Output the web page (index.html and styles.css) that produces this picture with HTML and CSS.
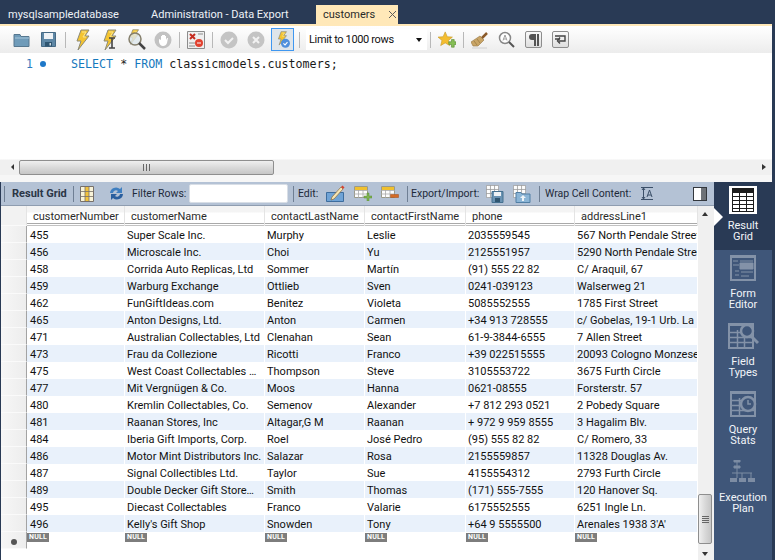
FILE: index.html
```html
<!DOCTYPE html>
<html lang="en">
<head>
<meta charset="utf-8">
<title>customers</title>
<link rel="stylesheet" href="styles.css">
</head>
<body>
<svg class="defs" width="0" height="0" aria-hidden="true">
  <defs>
    <symbol id="bolt" viewBox="0 0 20 22"><path d="M9 1h8l-4 6h4L6 21l3-9H5z" fill="#f4c430" stroke="#8c8a78" stroke-width="1"/><path d="M10 3h4l-3 5h3" fill="none" stroke="#fbe58d"/></symbol>
    <symbol id="tablemini" viewBox="0 0 16 16"><path d="M.5.5h15v15H.5z" fill="#fdfdfd" stroke="#9c9c9c"/><path d="M0 5.500h16M0 10.500h16M5.500 0v16M10.500 0v16" stroke="#9c9c9c"/></symbol>
  </defs>
</svg>
<div class="app">
  <nav class="tabs">
    <span class="tab tab-a">mysqlsampledatabase</span>
    <span class="tab tab-b">Administration - Data Export</span>
    <span class="tab tab-on">customers<svg class="close" width="9" height="9" viewBox="0 0 9 9"><path d="M1 1l7 7M8 1L1 8" stroke="#5c5c5c" stroke-width="1"/></svg></span>
  </nav>
  <div class="work">
    <div class="toolbar">
      <span class="btn"><svg width="17" height="15" viewBox="0 0 17 15"><path d="M1 2.500h6l1 2h8v10H1z" fill="#6f9bb9" stroke="#56778f"/><path d="M2 6h14" stroke="#a7c6da"/></svg></span>
      <span class="btn"><svg width="15" height="15" viewBox="0 0 15 15"><path d="M.5.500h14v14H.5z" fill="#5e87a5" stroke="#466a85"/><path d="M3 1h9v6H3z" fill="#eef2f5"/><path d="M4 10h7v4.500H4z" fill="#2f5570"/><path d="M8.500 11h1.500v2.500H8.500z" fill="#cfdbe3"/></svg></span>
      <i class="sep"></i>
      <span class="btn"><svg width="20" height="22"><use href="#bolt"/></svg></span>
      <span class="btn"><svg width="20" height="22" viewBox="0 0 20 22"><use href="#bolt" width="20" height="22"/><path d="M10 9h6M13 9v10M10 19h6" stroke="#444" stroke-width="1.600" fill="none"/></svg></span>
      <span class="btn"><svg width="20" height="22" viewBox="0 0 20 22"><use href="#bolt" width="15" height="16"/><circle cx="9" cy="10" r="6" fill="#dde7ec" fill-opacity=".8" stroke="#857f6c" stroke-width="1.500"/><path d="M13 14l6 6" stroke="#444" stroke-width="2.500"/></svg></span>
      <span class="btn"><svg width="18" height="18" viewBox="0 0 18 18"><circle cx="9" cy="9" r="8.500" fill="#c2c2c2"/><path d="M5 8v3q1 4 4 4t4-3l1-5h-1l-1 2V5h-1v3V4H9v4V4H8v4V5H7v4z" fill="#fff"/></svg></span>
      <i class="sep"></i>
      <span class="btn"><svg width="18" height="18" viewBox="0 0 18 18"><path d="M.5.500h17v17H.5z" fill="#efefef" stroke="#8c8c8c"/><path d="M3 3l5 5M8 3L3 8" stroke="#c52a1e" stroke-width="2"/><path d="M2 12h6M2 15h6M11 3h5" stroke="#8c8c8c"/><circle cx="12" cy="12" r="4" fill="#e2412f"/><path d="M10 12h4" stroke="#fff"/></svg></span>
      <i class="sep"></i>
      <span class="btn"><svg width="18" height="18" viewBox="0 0 18 18"><circle cx="9" cy="9" r="8.500" fill="#c4c4c4"/><path d="M5 9l3 3 5-5" fill="none" stroke="#f2f2f2" stroke-width="2"/></svg></span>
      <span class="btn"><svg width="18" height="18" viewBox="0 0 18 18"><circle cx="9" cy="9" r="8.500" fill="#c4c4c4"/><path d="M6 6l6 6M12 6l-6 6" stroke="#f2f2f2" stroke-width="2"/></svg></span>
      <span class="btn"><span class="toggled"><svg width="18" height="18" viewBox="0 0 20 22"><use href="#bolt" width="17" height="18"/><circle cx="13" cy="15" r="5.500" fill="#4f8fdc"/><path d="M10.500 15l2 2 3-3.500" fill="none" stroke="#fff" stroke-width="1.300"/></svg></span></span>
      <i class="sep"></i>
      <span class="limit"><span class="limit-text">Limit to 1000 rows</span><i class="caret"></i></span>
      <i class="sep"></i>
      <span class="btn"><svg width="18" height="18" viewBox="0 0 20 20"><path d="M8 1l2.300 5.400 5.700.4-4.400 3.700 1.400 5.700-5-3-5 3 1.400-5.700L0 6.800l5.700-.4z" fill="#f4bd2f" stroke="#c79a2a" stroke-width=".7"/><path d="M12 12h3V9.500h3V12h2v3h-2v3h-3v-3h-3z" fill="#86bf55" stroke="#5b8c35" stroke-width=".7"/></svg></span>
      <i class="sep"></i>
      <span class="btn"><svg width="18" height="18" viewBox="0 0 18 18"><path d="M0 11l9-6 4 4-6 6H2z" fill="#c9a566" stroke="#94743f" stroke-width=".6"/><path d="M11 7l5-5" stroke="#8a5a2a" stroke-width="2.500"/><path d="M3 10l3 4M6 8l3 4" stroke="#94743f" stroke-width=".7"/><path d="M1 17h15" stroke="#d0d0d0"/></svg></span>
      <span class="btn"><svg width="17" height="17" viewBox="0 0 17 17"><circle cx="7" cy="7" r="5.500" fill="#fff" stroke="#888" stroke-width="1.500"/><path d="M11 11l5 5" stroke="#555" stroke-width="2"/><path d="M5 9.500L7 4l2 5.500M5.700 8h2.600" fill="none" stroke="#888" stroke-width=".8"/></svg></span>
      <span class="btn"><span class="keybox"><svg width="10" height="12" viewBox="0 0 10 12"><path d="M5 0H3a3 3 0 0 0 0 6h2zM5 0h2v12H5zM8 0h2v12H8z" fill="#555"/></svg></span></span>
      <span class="btn"><span class="keybox"><svg width="11" height="9" viewBox="0 0 11 9"><path d="M0 1h10v5H4M0 4h5M5 2.500L2.500 6 5 8.500" fill="none" stroke="#444" stroke-width="1.400"/></svg></span></span>
    </div>
    <div class="editor">
      <span class="line-no">1</span><i class="dot"></i>
      <code class="sql"><b>SELECT</b> * <b>FROM</b> classicmodels.customers;</code>
    </div>
    <div class="hscroll">
      <i class="arrow-left"></i>
      <span class="hthumb"><i class="grip-v"></i></span>
      <span class="fill"></span>
      <i class="arrow-right"></i>
    </div>
    <div class="results">
      <div class="result-main">
        <div class="grid-bar">
          <i class="rsep first"></i>
          <strong class="result-label">Result Grid</strong>
          <i class="rsep s1"></i>
          <svg class="i-columns" width="14" height="16" viewBox="0 0 14 16"><path d="M.5.500h13v15H.5z" fill="#f8f3d8" stroke="#77706a"/><path d="M5 1h4v14H5z" fill="#f2c23c"/><path d="M0 5.500h14M0 10.500h14M5 0v16M9 0v16" stroke="#77706a" stroke-width=".8"/></svg>
          <svg class="i-refresh" width="17" height="15" viewBox="0 0 17 15"><path d="M2 7a6 6 0 0 1 10-4l2-2v6H8l2-2a3 3 0 0 0-5 2z" fill="#3f7fc0"/><path d="M15 8a6 6 0 0 1-10 4l-2 2V8h6l-2 2a3 3 0 0 0 5-2z" fill="#2a5f9e"/></svg>
          <span class="bar-label filter">Filter Rows:</span>
          <input class="filter-input" type="text" aria-label="Filter Rows">
          <i class="rsep s2"></i>
          <span class="bar-label edit">Edit:</span>
          <svg class="i-edit" width="19" height="17" viewBox="0 0 19 17"><path d="M.5 7.500h17v9H.5z" fill="#6fa3d6" stroke="#3d6d9e"/><path d="M6 12L15 2l2 2-9 10-3 1z" fill="#f6e5b4" stroke="#8a6a3a" stroke-width=".7"/><path d="M15 2l1.500-1.500 2 2L17 4z" fill="#d5432f"/></svg>
          <svg class="i-add" width="18" height="15" viewBox="0 0 18 15"><path d="M.5.500h13v11H.5z" fill="#fdfdfd" stroke="#9a9a8a"/><path d="M1 1h12v3H1z" fill="#f0c02f"/><path d="M0 4.500h14M0 8h14M4.500 4v8M9 4v8" stroke="#aaa" stroke-width=".8"/><path d="M10 10h3V7h2v3h3v2h-3v3h-2v-3h-3z" fill="#7fb34f" stroke="#5b8c35" stroke-width=".5"/></svg>
          <svg class="i-del" width="18" height="15" viewBox="0 0 18 15"><path d="M.5.500h13v11H.5z" fill="#fdfdfd" stroke="#9a9a8a"/><path d="M1 1h12v3H1z" fill="#f0c02f"/><path d="M0 4.500h14M0 8h14M4.500 4v8M9 4v8" stroke="#aaa" stroke-width=".8"/><path d="M9.500 8.500h8v3h-8z" fill="#d46a25" stroke="#a04a15" stroke-width=".5"/></svg>
          <i class="rsep s3"></i>
          <span class="bar-label export">Export/Import:</span>
          <svg class="i-export" width="18" height="18" viewBox="0 0 18 18"><use href="#tablemini" width="13" height="13"/><path d="M6 6.500h11v11H6z" fill="#6a93b3" stroke="#44708f"/><path d="M8 7h7v4H8z" fill="#eef2f5"/><path d="M9 13h5v4H9z" fill="#2f5570"/></svg>
          <svg class="i-import" width="18" height="18" viewBox="0 0 18 18"><use href="#tablemini" width="13" height="13"/><path d="M3 7.500h5l1 1.500h8v8.500H3z" fill="#8bb5d6" stroke="#517fa5"/><path d="M10 10l3 3h-2v3H9v-3H7z" fill="#eef4f8"/></svg>
          <i class="rsep s4"></i>
          <span class="bar-label wrap">Wrap Cell Content:</span>
          <svg class="i-wrap" width="12" height="13" viewBox="0 0 12 13"><path d="M0 .500h12M0 12.500h12M2.500 1v11M1 3l1.500-2L4 3M1 10l1.500 2L4 10" fill="none" stroke="#3b4f68"/><path d="M6 10L8.500 3 11 10M7 8h3" fill="none" stroke="#3b4f68"/></svg>
          <span class="i-toggle"><i></i></span>
        </div>
        <div class="grid-area">
          <div class="table">
            <div class="row head"><span class="rh"></span><span>customerNumber</span><span>customerName</span><span>contactLastName</span><span>contactFirstName</span><span>phone</span><span>addressLine1</span></div>
            <div class="row"><span class="rh"></span><span>455</span><span>Super Scale Inc.</span><span>Murphy</span><span>Leslie</span><span>2035559545</span><span>567 North Pendale Street</span></div>
            <div class="row alt"><span class="rh"></span><span>456</span><span>Microscale Inc.</span><span>Choi</span><span>Yu</span><span>2125551957</span><span>5290 North Pendale Street</span></div>
            <div class="row"><span class="rh"></span><span>458</span><span>Corrida Auto Replicas, Ltd</span><span>Sommer</span><span>Martín</span><span>(91) 555 22 82</span><span>C/ Araquil, 67</span></div>
            <div class="row alt"><span class="rh"></span><span>459</span><span>Warburg Exchange</span><span>Ottlieb</span><span>Sven</span><span>0241-039123</span><span>Walserweg 21</span></div>
            <div class="row"><span class="rh"></span><span>462</span><span>FunGiftIdeas.com</span><span>Benitez</span><span>Violeta</span><span>5085552555</span><span>1785 First Street</span></div>
            <div class="row alt"><span class="rh"></span><span>465</span><span>Anton Designs, Ltd.</span><span>Anton</span><span>Carmen</span><span>+34 913 728555</span><span>c/ Gobelas, 19-1 Urb. La Florida</span></div>
            <div class="row"><span class="rh"></span><span>471</span><span>Australian Collectables, Ltd</span><span>Clenahan</span><span>Sean</span><span>61-9-3844-6555</span><span>7 Allen Street</span></div>
            <div class="row alt"><span class="rh"></span><span>473</span><span>Frau da Collezione</span><span>Ricotti</span><span>Franco</span><span>+39 022515555</span><span>20093 Cologno Monzese</span></div>
            <div class="row"><span class="rh"></span><span>475</span><span>West Coast Collectables …</span><span>Thompson</span><span>Steve</span><span>3105553722</span><span>3675 Furth Circle</span></div>
            <div class="row alt"><span class="rh"></span><span>477</span><span>Mit Vergnügen &amp; Co.</span><span>Moos</span><span>Hanna</span><span>0621-08555</span><span>Forsterstr. 57</span></div>
            <div class="row"><span class="rh"></span><span>480</span><span>Kremlin Collectables, Co.</span><span>Semenov</span><span>Alexander</span><span>+7 812 293 0521</span><span>2 Pobedy Square</span></div>
            <div class="row alt"><span class="rh"></span><span>481</span><span>Raanan Stores, Inc</span><span>Altagar,G M</span><span>Raanan</span><span>+ 972 9 959 8555</span><span>3 Hagalim Blv.</span></div>
            <div class="row"><span class="rh"></span><span>484</span><span>Iberia Gift Imports, Corp.</span><span>Roel</span><span>José Pedro</span><span>(95) 555 82 82</span><span>C/ Romero, 33</span></div>
            <div class="row alt"><span class="rh"></span><span>486</span><span>Motor Mint Distributors Inc.</span><span>Salazar</span><span>Rosa</span><span>2155559857</span><span>11328 Douglas Av.</span></div>
            <div class="row"><span class="rh"></span><span>487</span><span>Signal Collectibles Ltd.</span><span>Taylor</span><span>Sue</span><span>4155554312</span><span>2793 Furth Circle</span></div>
            <div class="row alt"><span class="rh"></span><span>489</span><span>Double Decker Gift Store…</span><span>Smith</span><span>Thomas</span><span>(171) 555-7555</span><span>120 Hanover Sq.</span></div>
            <div class="row"><span class="rh"></span><span>495</span><span>Diecast Collectables</span><span>Franco</span><span>Valarie</span><span>6175552555</span><span>6251 Ingle Ln.</span></div>
            <div class="row alt"><span class="rh"></span><span>496</span><span>Kelly's Gift Shop</span><span>Snowden</span><span>Tony</span><span>+64 9 5555500</span><span>Arenales 1938 3'A'</span></div>
            <div class="row null-row"><span class="rh"><i class="star"></i></span><span><b class="null">NULL</b></span><span><b class="null">NULL</b></span><span><b class="null">NULL</b></span><span><b class="null">NULL</b></span><span><b class="null">NULL</b></span><span><b class="null">NULL</b></span></div>
          </div>
          <div class="vscroll">
            <i class="arrow-up"></i>
            <span class="fill"></span>
            <span class="vthumb"><i class="grip-h"></i></span>
            <i class="arrow-down"></i>
          </div>
        </div>
      </div>
      <aside class="side">
        <div class="side-item on">
          <span class="tile"><svg width="22" height="24" viewBox="0 0 22 24"><path d="M0 0h22v24H0z" fill="#1c1c1c"/><path d="M1 5h20v18H1z" fill="#fff"/><path d="M0 8.500h22M0 12.500h22M0 16.500h22M0 20.500h22M7.500 5v19M14.500 5v19" stroke="#1c1c1c"/></svg></span>
          <span class="side-label">Result<br>Grid</span>
          <i class="pointer"></i>
        </div>
        <div class="side-item">
          <svg class="side-icon" width="28" height="28" viewBox="0 0 28 28"><path d="M1 1h26v26H1z" fill="#8392a8"/><path d="M3 4h22v21H3z" fill="#3f5679"/><path d="M4 7h5M4 11h6M11 7h13M11 9h13v6H11zM6 17h4M6 21h4M12 18h12M12 22h8" stroke="#8392a8" fill="#8392a8"/></svg>
          <span class="side-label">Form<br>Editor</span>
        </div>
        <div class="side-item">
          <svg class="side-icon" width="32" height="28" viewBox="0 0 32 28"><path d="M1 1h26v26H1z" fill="#8392a8"/><path d="M3 4h22v21H3z" fill="#3f5679"/><path d="M3 10.500h22M3 15.500h22M3 20.500h22M10.500 8v17M17.500 8v17" stroke="#8392a8" stroke-width="1.500"/><circle cx="20" cy="9" r="6" fill="#3f5679" stroke="#8392a8" stroke-width="2.500"/><path d="M24 14l7 7" stroke="#8392a8" stroke-width="3"/></svg>
          <span class="side-label">Field<br>Types</span>
        </div>
        <div class="side-item">
          <svg class="side-icon" width="28" height="28" viewBox="0 0 28 28"><path d="M1 1h26v26H1z" fill="#8392a8"/><path d="M3 4h22v21H3z" fill="#3f5679"/><path d="M3 10.500h22M3 15.500h22M3 20.500h22M10.500 8v17" stroke="#8392a8" stroke-width="1.500"/><circle cx="19" cy="14" r="7" fill="#3f5679" stroke="#8392a8" stroke-width="2.500"/><path d="M19 10v4h3" fill="none" stroke="#8392a8" stroke-width="1.500"/></svg>
          <span class="side-label">Query<br>Stats</span>
        </div>
        <div class="side-item plan">
          <svg class="side-icon" width="26" height="23" viewBox="0 0 26 23"><path d="M4 0h6v2H4zM4 6h6v2H4zM7 2v16M2 13h20" stroke="#7d8ca3" fill="#7d8ca3"/><path d="M0 18h7v4H0zM9 18h7v4H9zM18 18h7v4h-7z" fill="#7d8ca3"/><path d="M12 13v5M21 13v5" stroke="#7d8ca3"/></svg>
          <span class="side-label">Execution<br>Plan</span>
        </div>
      </aside>
    </div>
  </div>
</div>
</body>
</html>
```
FILE: styles.css
```css
* { box-sizing: border-box; }
html, body { margin: 0; padding: 0; }
body { width: 775px; height: 560px; overflow: hidden; font-family: Roboto, "Noto Sans", sans-serif; font-size: 11px; color: #111; background: #293a55; }
.defs { display: block; height: 0; }
.app { width: 775px; height: 560px; display: flex; flex-direction: column; background: #293a55; }

.tabs { height: 24px; flex: none; display: flex; align-items: flex-end; color: #eef2f7; }
.tab { height: 19px; line-height: 20px; white-space: nowrap; }
.tab-a { margin-left: 8px; width: 143px; }
.tab-b { width: 165px; }
.tab-on { width: 82px; background: #ffe8b8; color: #2a2a2a; padding-left: 7px; display: flex; align-items: center; }
.close { margin-left: 13px; }

.work { flex: 1; min-height: 0; width: 772px; display: flex; flex-direction: column; background: #fff; }
.toolbar { height: 29px; flex: none; border-top: 2px solid #ffe8b8; background: linear-gradient(#fff, #ececec); padding-left: 8px; display: flex; align-items: center; }
.btn { width: 27px; height: 24px; flex: none; display: flex; align-items: center; justify-content: center; }
.sep { width: 6px; height: 16px; flex: none; background: linear-gradient(#b8b8b8, #b8b8b8) center / 1px 100% no-repeat; }
.toggled { width: 23px; height: 23px; border: 1px solid #3f97f0; background: #dfe5ea; display: flex; align-items: center; justify-content: center; }
.limit { width: 121px; height: 21px; margin-left: 4px; flex: none; background: #fff; display: flex; align-items: center; justify-content: space-between; padding: 0 5px 0 3px; }
.limit-text { font-size: 11px; line-height: 23px; letter-spacing: -.35px; color: #111; white-space: nowrap; }
.caret { width: 0; height: 0; border-left: 3.500px solid transparent; border-right: 3.500px solid transparent; border-top: 4px solid #111; }
.keybox { width: 17px; height: 17px; border: 1px solid #8d8d8d; border-radius: 2px; background: linear-gradient(#fafafa, #dedede); display: flex; align-items: center; justify-content: center; }

.editor { height: 104px; flex: none; background: #fff; display: flex; align-items: flex-start; padding: 3px 0 0 26px; font-size: 12px; }
.line-no { color: #2e7cc0; width: 14px; font-family: "DejaVu Sans Mono", monospace; font-size: 11.500px; line-height: 16px; }
.dot { width: 6px; height: 6px; border-radius: 50%; background: #1e78c8; margin: 5px 0 0 0; }
.sql { margin-left: 25px; font-family: "DejaVu Sans Mono", monospace; font-size: 11.670px; line-height: 16px; color: #1a1a1a; white-space: pre; }
.sql b { font-weight: 400; color: #1679bd; }

.hscroll { height: 25px; flex: none; background: linear-gradient(#fff 0, #fff 2px, #f0f0f0 3px, #f0f0f0 18px, #f6f6f6 18px); display: flex; align-items: flex-start; padding-top: 3px; }
.hthumb { width: 255px; height: 15px; margin-left: 5px; border: 1px solid #8e8e8e; border-radius: 2px; background: linear-gradient(#efefef, #d9d9d9 50%, #c6c6c6); display: flex; align-items: center; justify-content: center; }
.fill { flex: 1; }
.arrow-left { width: 8px; margin-left: 6px; margin-top: 4px; height: 0; border-top: 3.500px solid transparent; border-bottom: 3.500px solid transparent; border-right: 3.500px solid #333; }
.arrow-right { width: 0; margin-right: 6px; margin-top: 4px; height: 0; border-top: 3.500px solid transparent; border-bottom: 3.500px solid transparent; border-left: 4px solid #333; }
.grip-v { width: 7px; height: 7px; background: repeating-linear-gradient(90deg, #666 0 1px, transparent 1px 3px); }

.results { flex: 1; min-height: 0; display: flex; }
.result-main { width: 714px; flex: none; display: flex; flex-direction: column; border-left: 1px solid #293a55; background: #fff; }
.grid-bar { height: 24px; flex: none; background: #b4c2d5; border-bottom: 1px solid #8f9db0; display: flex; align-items: center; color: #1e2a3a; }
.rsep { width: 1px; height: 16px; flex: none; background: #6f7f94; }
.rsep.first { margin-left: 3px; }
.result-label { margin-left: 7px; width: 54px; font-size: 11px; line-height: 26px; font-weight: 700; white-space: nowrap; color: #2b3646; }
.rsep.s1 { margin-left: 7px; }
.i-columns { margin-left: 6px; flex: none; }
.i-refresh { margin-left: 14px; flex: none; }
.bar-label { white-space: nowrap; font-size: 10.500px; line-height: 26px; }
.filter { margin-left: 7px; width: 57px; }
.filter-input { width: 99px; height: 19px; margin: 0 5px 0 0; padding: 0; border: 1px solid #d8dee6; border-radius: 2px; background: #fff; flex: none; }
.edit { margin-left: 4px; width: 21px; }
.i-edit { margin-left: 7px; flex: none; }
.i-add { margin-left: 9px; flex: none; }
.i-del { margin-left: 9px; flex: none; }
.rsep.s3 { margin-left: 8px; }
.export { margin-left: 3px; width: 72px; }
.i-export { margin-left: 3px; flex: none; }
.i-import { margin-left: 9px; flex: none; }
.rsep.s4 { margin-left: 8px; }
.wrap { margin-left: 5px; width: 90px; }
.i-wrap { margin-left: 6px; flex: none; }
.i-toggle { width: 14px; height: 14px; margin-left: 40px; border: 1px solid #33373d; background: #fff; flex: none; display: flex; justify-content: flex-end; }
.i-toggle i { width: 5px; background: #6d7278; }

.grid-area { flex: 1; min-height: 0; display: flex; }
.table { width: 697px; flex: none; background: #fff; overflow: hidden; }
.row { height: 17px; display: grid; grid-template-columns: 26px 98px 140px 100px 101px 109px 123px; line-height: 20px; color: #111; }
.row > span { overflow: hidden; white-space: nowrap; padding-left: 2px; border-right: 1px solid #fff; }
.row > span:nth-child(2) { padding-left: 3px; }
.row.alt > span { background: #e9f1fb; }
.row > .rh, .row.alt > .rh { padding: 0; background: linear-gradient(90deg, #f6f6f6, #ededed); border-right: 1px solid #a3a3a3; border-bottom: 1px solid #fafafa; }
.row.head { height: 20px; background: linear-gradient(#f4f4f4 0, #f4f4f4 6px, #fff 7px, #fff 17px, #a9a9a9 17px, #a9a9a9 18px, #fff 18px, #fff 19px, #c2c2c2 19px); color: #2a2a2a; line-height: 21px; }
.row.head > span { padding-left: 6px; border-right: 1px solid #e4e4e4; }
.row.head > .rh { background: #f2f2f2; }
.null-row { height: 17px; }
.null-row > span { line-height: 8px; padding-left: 0; padding-top: 1px; }
.row.null-row > span:nth-child(2) { padding-left: 0; }
.null { display: inline-block; width: 22px; height: 9px; background: #7d7d7d; color: #fff; font-size: 7px; font-weight: 700; line-height: 8px; text-align: center; vertical-align: top; letter-spacing: .2px; }
.row.null-row > .rh { display: flex; align-items: center; justify-content: center; padding-left: 0; }
.star { width: 6px; height: 6px; border-radius: 50%; background: #555; margin-top: 4px; }

.vscroll { width: 17px; flex: none; background: #f0f0f0; display: flex; flex-direction: column; align-items: flex-start; padding: 6px 0 4px 0; }
.arrow-up { width: 0; height: 0; margin-left: 4px; border-left: 3.500px solid transparent; border-right: 3.500px solid transparent; border-bottom: 4px solid #333; }
.arrow-down { width: 0; height: 0; margin: 8px 0 0 4px; border-left: 3.500px solid transparent; border-right: 3.500px solid transparent; border-top: 4px solid #333; }
.vthumb { width: 14px; height: 50px; border: 1px solid #8e8e8e; border-radius: 2px; background: linear-gradient(90deg, #efefef, #d9d9d9 50%, #c6c6c6); display: flex; align-items: center; justify-content: center; }
.grip-h { width: 7px; height: 7px; background: repeating-linear-gradient(#666 0 1px, transparent 1px 2px); }

.side { width: 58px; flex: none; background: #3f5679; display: flex; flex-direction: column; color: #f1f4f8; }
.side-item { height: 68px; flex: none; display: flex; flex-direction: column; align-items: center; position: relative; padding-top: 4px; }
.side-item.on { background: #293a55; }
.side-icon { flex: none; }
.tile { width: 28px; height: 28px; background: #fff; display: flex; align-items: center; justify-content: center; flex: none; }
.side-label { margin-top: 6px; text-align: center; line-height: 11px; font-size: 11px; white-space: nowrap; }
.plan { padding-top: 6px; }
.plan .side-label { margin-top: 9px; }
.pointer { position: absolute; left: 0; top: 26px; width: 0; height: 0; border-top: 9px solid transparent; border-bottom: 9px solid transparent; border-left: 9px solid #fff; }
```
